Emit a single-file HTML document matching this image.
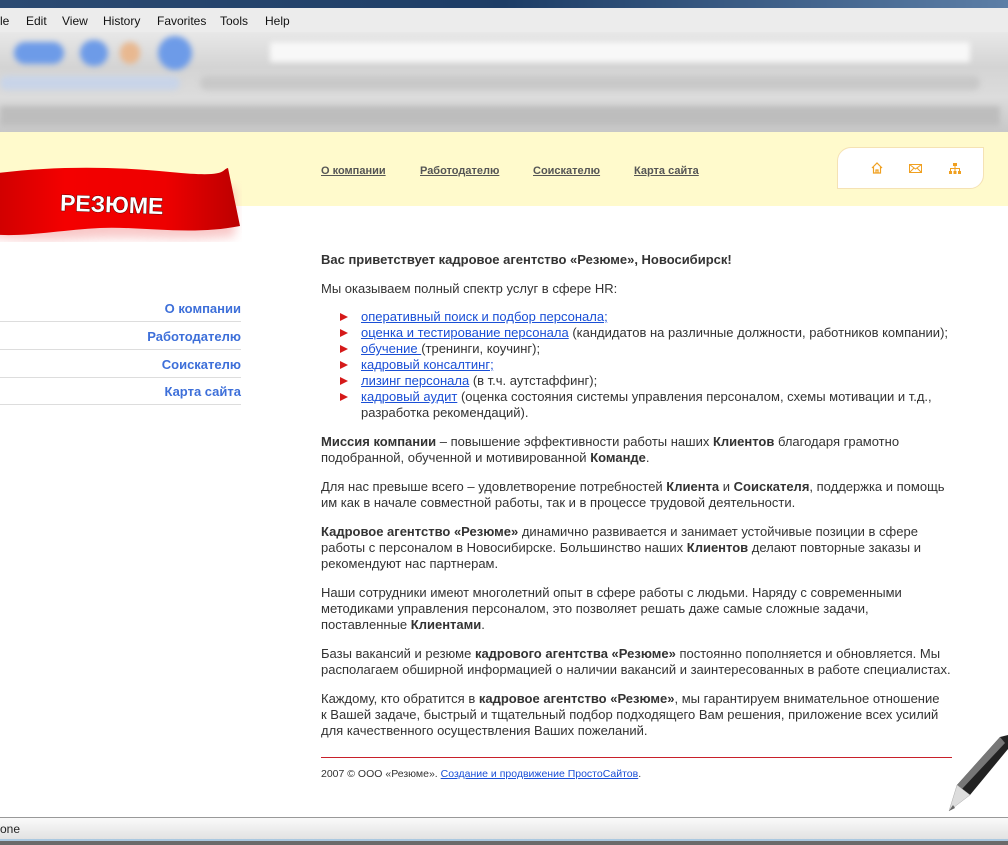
<!DOCTYPE html>
<html><head><meta charset="utf-8"><style>
*{margin:0;padding:0;box-sizing:border-box}
body{width:1008px;height:845px;overflow:hidden;position:relative;font-family:"Liberation Sans",Arial,sans-serif;background:#fff;color:#222}
.abs{position:absolute}
#title{left:0;top:0;width:1008px;height:8px;background:linear-gradient(90deg,#2b4a72,#1d3d66 50%,#5c7ea6)}
#menu{left:0;top:8px;width:1008px;height:24px;background:#ececec;font-size:12px;color:#111}
#menu span{position:absolute;top:6px}
#tb{left:0;top:32px;width:1008px;height:100px;background:linear-gradient(#e8e8e8,#d4d4d4 35%,#dcdcdc 65%,#c8c8c8)}
.blob{position:absolute;border-radius:12px;filter:blur(3px)}
#hdr{left:0;top:132px;width:1008px;height:74px;background:#fffacc}
#icons{left:837px;top:147px;width:147px;height:42px;background:#fff;border:1px solid #f5e2b4;border-radius:14px 0 14px 0}
.nav{position:absolute;top:165px;font-size:11px;font-weight:bold;color:#555;text-decoration:underline}
#ribbon{left:-10px;top:166px;width:252px;height:76px}
.lnav{position:absolute;left:0;width:241px;text-align:right;font-size:13px;font-weight:bold;color:#3d6fd9;border-bottom:1px solid #ddd;height:28px;padding-top:7px}
#content{left:321px;top:252px;width:633px;font-size:13px;line-height:16px;color:#333}
#content p{margin-bottom:13px}
a{color:#1a4fd6}
ul{list-style:none;margin-bottom:13px;padding-left:19px}
li{position:relative;padding-left:21px}
li:before{content:"";position:absolute;left:0;top:4px;border-left:8px solid #d51a1a;border-top:4px solid transparent;border-bottom:4px solid transparent}
#hr{left:321px;top:757px;width:631px;height:1px;background:#c8202a}
#foot{left:321px;top:768px;font-size:10.5px;color:#333}
#status{left:0;top:817px;width:1008px;height:22px;background:linear-gradient(#fafafa,#e2e2e2);border-top:1px solid #999;font-size:12px;padding:4px 0 0 0}
#bot{left:0;top:839px;width:1008px;height:6px;background:#6a6a6a;border-top:2px solid #aac8e0}
</style></head><body>
<div id="title" class="abs"></div>
<div id="menu" class="abs"><span style="left:0">le</span><span style="left:26px">Edit</span><span style="left:62px">View</span><span style="left:103px">History</span><span style="left:157px">Favorites</span><span style="left:220px">Tools</span><span style="left:265px">Help</span></div>
<div id="tb" class="abs">
<div class="blob" style="left:14px;top:10px;width:50px;height:22px;background:#6d9be8"></div>
<div class="blob" style="left:80px;top:8px;width:28px;height:26px;background:#6d9be8;border-radius:14px"></div>
<div class="blob" style="left:120px;top:10px;width:20px;height:22px;background:#e8b890"></div>
<div class="blob" style="left:158px;top:4px;width:34px;height:34px;background:#6d9be8;border-radius:17px"></div>
<div class="blob" style="left:270px;top:10px;width:700px;height:20px;background:#f8f8f8;border-radius:2px"></div>
<div class="blob" style="left:0;top:44px;width:180px;height:14px;background:#c8d4e8"></div>
<div class="blob" style="left:200px;top:44px;width:780px;height:14px;background:#c8c8c8"></div>
<div class="blob" style="left:0;top:74px;width:1000px;height:20px;background:#bdbdbd;border-radius:2px"></div>
</div>
<div id="hdr" class="abs"></div>
<svg id="ribbon" class="abs" viewBox="0 0 252 76"><defs><linearGradient id="g" x1="0" x2="1"><stop offset="0" stop-color="#c00"/><stop offset=".3" stop-color="#f40000"/><stop offset=".7" stop-color="#e00"/><stop offset="1" stop-color="#b00"/></linearGradient><filter id="f"><feGaussianBlur stdDeviation="5"/></filter></defs>
<path d="M0 20 C60 20 120 30 180 25 S 220 20 245 22 L 245 70 C 200 76 150 70 110 72 S 30 76 0 70 Z" fill="#f6b0b0" filter="url(#f)" opacity=".7"/>
<path d="M0 8 C60 0 120 0 180 6 S 230 4 238 2 L 250 60 C 200 70 150 60 110 62 S 30 72 0 68 Z" fill="url(#g)"/>
<text x="70" y="46" font-family="Liberation Sans,Arial" font-weight="900" font-size="23" fill="#fff" stroke="#500" stroke-width="1" paint-order="stroke" transform="rotate(2 110 40)">РЕЗЮМЕ</text></svg>
<div class="nav" style="left:321px">О компании</div>
<div class="nav" style="left:420px">Работодателю</div>
<div class="nav" style="left:533px">Соискателю</div>
<div class="nav" style="left:634px">Карта сайта</div>
<div id="icons" class="abs">
<svg class="abs" style="left:33px;top:14px" width="12" height="12" viewBox="0 0 12 12" fill="none" stroke="#f0a020" stroke-width="1.2"><path d="M1 6 L6 1 L11 6 M2.5 5 V11 H9.5 V5 M5 11 V8 H7 V11"/></svg>
<svg class="abs" style="left:71px;top:16px" width="13" height="9" viewBox="0 0 13 9" fill="none" stroke="#f0a020"><rect x=".5" y=".5" width="12" height="8"/><path d="M.5 .5 L6.5 5 L12.5 .5 M.5 8.5 L5 4 M12.5 8.5 L8 4"/></svg>
<svg class="abs" style="left:111px;top:15px" width="12" height="11" viewBox="0 0 12 11" fill="#f0a020"><rect x="4" y="0" width="4" height="3"/><rect x="0" y="8" width="3" height="3"/><rect x="4.5" y="8" width="3" height="3"/><rect x="9" y="8" width="3" height="3"/><rect x="1" y="5" width="10" height="1"/><rect x="5.5" y="3" width="1" height="5"/><rect x="1" y="5" width="1" height="3"/><rect x="10" y="5" width="1" height="3"/></svg>
</div>
<div class="lnav" style="top:294px">О компании</div>
<div class="lnav" style="top:322px">Работодателю</div>
<div class="lnav" style="top:350px">Соискателю</div>
<div class="lnav" style="top:377px">Карта сайта</div>
<div id="content" class="abs">
<p style="margin-bottom:13px"><b>Вас приветствует кадровое агентство «Резюме», Новосибирск!</b></p>
<p style="margin-bottom:12px">Мы оказываем полный спектр услуг в сфере HR:</p>
<ul>
<li><a href="#">оперативный поиск и подбор персонала;</a></li>
<li><a href="#">оценка и тестирование персонала</a> (кандидатов на различные должности, работников компании);</li>
<li><a href="#">обучение </a>(тренинги, коучинг);</li>
<li><a href="#">кадровый консалтинг;</a></li>
<li><a href="#">лизинг персонала</a> (в т.ч. аутстаффинг);</li>
<li><a href="#">кадровый аудит</a> (оценка состояния системы управления персоналом, схемы мотивации и т.д., разработка рекомендаций).</li>
</ul>
<p><b>Миссия компании</b> – повышение эффективности работы наших <b>Клиентов</b> благодаря грамотно подобранной, обученной и мотивированной <b>Команде</b>.</p>
<p>Для нас превыше всего – удовлетворение потребностей <b>Клиента</b> и <b>Соискателя</b>, поддержка и помощь им как в начале совместной работы, так и в процессе трудовой деятельности.</p>
<p><b>Кадровое агентство «Резюме»</b> динамично развивается и занимает устойчивые позиции в сфере работы с персоналом в Новосибирске. Большинство наших <b>Клиентов</b> делают повторные заказы и рекомендуют нас партнерам.</p>
<p>Наши сотрудники имеют многолетний опыт в сфере работы с людьми. Наряду с современными методиками управления персоналом, это позволяет решать даже самые сложные задачи, поставленные <b>Клиентами</b>.</p>
<p>Базы вакансий и резюме <b>кадрового агентства «Резюме»</b> постоянно пополняется и обновляется. Мы располагаем обширной информацией о наличии вакансий и заинтересованных в работе специалистах.</p>
<p>Каждому, кто обратится в <b>кадровое агентство «Резюме»</b>, мы гарантируем внимательное отношение<br>к Вашей задаче, быстрый и тщательный подбор подходящего Вам решения, приложение всех усилий<br>для качественного осуществления Ваших пожеланий.</p>
</div>
<div id="hr" class="abs"></div>
<div id="foot" class="abs">2007 © ООО «Резюме». <a href="#">Создание и продвижение ПростоСайтов</a>.</div>
<svg class="abs" style="left:945px;top:735px" width="63" height="80" viewBox="0 0 63 80"><path d="M63 0 L63 14 L25 60 L12 50 L55 2 Z" fill="#222"/><path d="M55 2 L12 50 L17 54 L60 8 Z" fill="#777"/><path d="M12 50 L25 60 L4 76 Z" fill="#ddd" stroke="#aaa" stroke-width=".5"/><path d="M8 70 L4 76 L10 73 Z" fill="#666"/></svg>
<div id="status" class="abs">one</div>
<div id="bot" class="abs"></div>
</body></html>
